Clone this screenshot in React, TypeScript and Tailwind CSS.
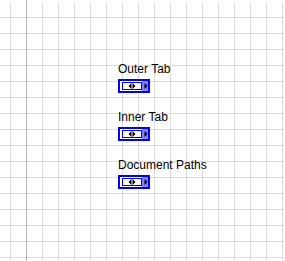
import React from 'react';

const items = ['Outer Tab', 'Inner Tab', 'Document Paths'];

const TabTerminal = () => (
  <svg width="32" height="14" viewBox="0 0 32 14" className="block">
    <rect x="1" y="1" width="30" height="12" fill="#ffffff" stroke="#0000ff" strokeWidth="2" />
    <rect x="24" y="2" width="6" height="10" fill="#8080ff" />
    <rect x="4.5" y="3.5" width="19" height="7" fill="#ffffff" stroke="#0000ff" strokeWidth="1" />
    <polygon points="10.5,7 13.5,4 13.5,10" fill="#000000" />
    <polygon points="14.5,4 17.5,7 14.5,10" fill="#000000" />
    <polygon points="26.5,4 29.5,7 26.5,10" fill="#000000" />
  </svg>
);

const App = () => {
  return (
    <div className="relative w-[285px] h-[261px] overflow-hidden bg-white bg-[linear-gradient(to_right,#dcdcdc_1px,transparent_1px),linear-gradient(to_bottom,#dcdcdc_1px,transparent_1px)] bg-[size:16px_16px] bg-[position:10px_1px] font-['Liberation_Sans',Arial,sans-serif]">
      <div className="absolute left-0 top-0 h-[2px] w-full bg-white" />
      <div className="absolute left-[26px] top-0 h-full w-px bg-[#b4b4b4]" />
      <div className="relative flex flex-col gap-[17px] pl-[118px] pt-[62px]">
        {items.map((label) => (
          <div key={label} className="flex flex-col items-start">
            <span className="text-[12px] leading-[14px] text-black whitespace-nowrap">{label}</span>
            <div className="mt-[3px]">
              <TabTerminal />
            </div>
          </div>
        ))}
      </div>
    </div>
  );
};

export default App;
